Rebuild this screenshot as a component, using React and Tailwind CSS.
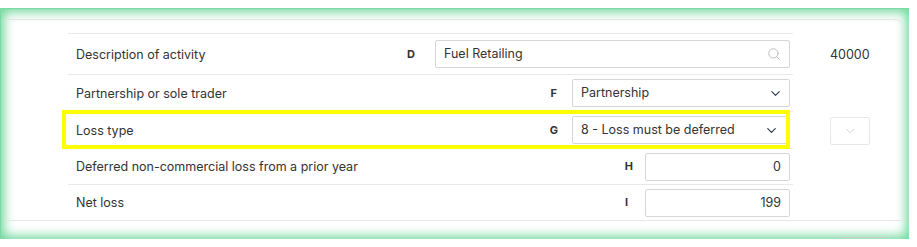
import { ChevronDown, Search } from "lucide-react";

const font = { fontFamily: "Inter, 'Liberation Sans', sans-serif" };

function Code({ children, className = "" }) {
  return (
    <span className={`text-[11px] font-bold text-[#333] text-center ${className}`}>
      {children}
    </span>
  );
}

function Row({ label, code, codeClass, children, right, height = "h-[37px]", last }) {
  return (
    <div className="flex">
      <div
        className={`w-[725px] ${height} flex items-center pl-2 pr-[3px] ${
          last ? "" : "border-b border-[#e9e9e9]"
        } relative`}
      >
        <span className="flex-1 text-[12.5px] text-[#333] pt-[2px]">{label}</span>
        <Code className={codeClass}>{code}</Code>
        {children}
      </div>
      <div className="ml-[37px] w-[40px] flex items-center">{right}</div>
    </div>
  );
}

export default function App() {
  return (
    <div className="bg-white w-[917px] h-[247px] pt-2" style={font}>
      <div className="relative w-[909px] h-[231px] overflow-hidden shadow-[inset_0_0_11px_3px_#6fd69b] border-l border-t border-[#7bd9a3]">
        <div className="ml-[5px] mt-[10px] w-[897px] border-t border-r border-b border-[#e6e6e6] rounded-tr-lg pt-[13px] pl-[62px]">
          <div className="w-[725px] border-t border-[#e9e9e9]" />
          <Row
            label="Description of activity"
            code="D"
            codeClass="mr-[20px]"
            height="h-[41px]"
            right={<span className="text-[12.5px] text-[#333] pt-[2px]">40000</span>}
          >
            <div className="w-[355px] h-[28px] border border-[#d6d6d6] rounded-[2px] flex items-center pl-2 pr-2">
              <span className="flex-1 text-[12.5px] text-[#333] pt-[1px]">Fuel Retailing</span>
              <Search size={14} strokeWidth={1.5} className="text-[#b5b5b5]" />
            </div>
          </Row>
          <Row label="Partnership or sole trader" code="F" codeClass="mr-[15px]">
            <div className="w-[218px] h-[28px] border border-[#d6d6d6] rounded-[2px] flex items-center pl-2 pr-[6px]">
              <span className="flex-1 text-[12.5px] text-[#333] pt-[1px]">Partnership</span>
              <ChevronDown size={15} strokeWidth={1.8} className="text-[#2a3550]" />
            </div>
          </Row>
          <Row
            label="Loss type"
            code="G"
            codeClass="mr-[14px]"
            right={
              <div className="w-[40px] h-[28px] border border-[#e6e6e6] rounded-[2px] flex items-center justify-center">
                <ChevronDown size={14} strokeWidth={1.3} className="text-[#c8c8c8]" />
              </div>
            }
          >
            <div className="w-[218px] h-[28px] border border-[#d6d6d6] rounded-[2px] flex items-center pl-2 pr-[10px]">
              <span className="flex-1 text-[12.5px] text-[#333] pt-[1px]">8 - Loss must be deferred</span>
              <ChevronDown size={15} strokeWidth={1.8} className="text-[#2a3550]" />
            </div>
            <div className="absolute left-[-6px] right-[3px] top-[-2px] bottom-[-1px] border-4 border-[#ffff00] pointer-events-none" />
          </Row>
          <Row
            label="Deferred non-commercial loss from a prior year"
            code="H"
            codeClass="mr-[12px]"
            height="h-[36px]"
          >
            <div className="w-[145px] h-[28px] border border-[#d6d6d6] rounded-[2px] flex items-center justify-end pr-2">
              <span className="text-[12.5px] text-[#333] pt-[1px]">0</span>
            </div>
          </Row>
          <Row label="Net loss" code="I" codeClass="mr-[17px]" height="h-[35px]" last>
            <div className="w-[145px] h-[28px] border border-[#d6d6d6] rounded-[2px] flex items-center justify-end pr-2">
              <span className="text-[12.5px] text-[#333] pt-[1px]">199</span>
            </div>
          </Row>
        </div>
        <div className="flex justify-end pr-[18px] mt-[16px]">
          <div className="w-[56px] h-[30px] border border-[#cfcfcf] rounded-md" />
        </div>
      </div>
    </div>
  );
}
